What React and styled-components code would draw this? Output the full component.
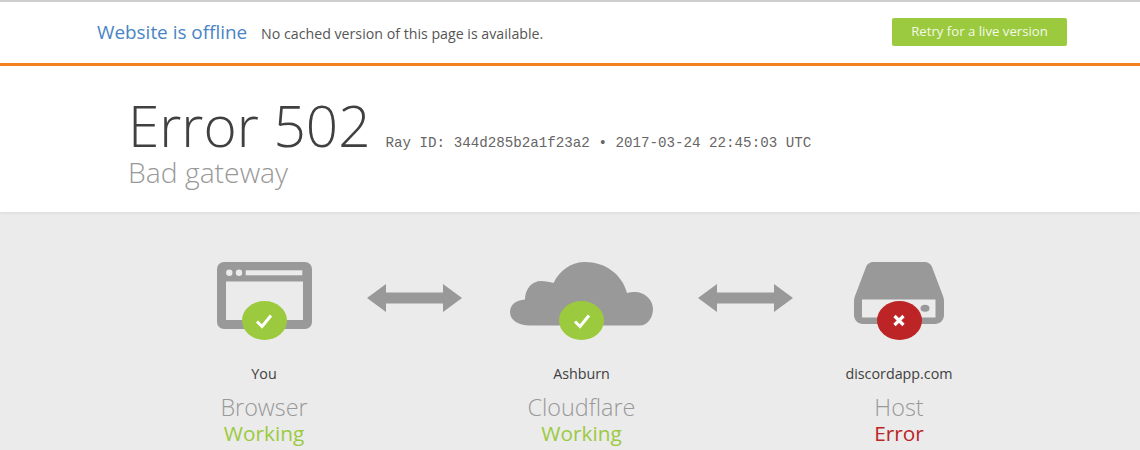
import React from 'react';
import styled, { createGlobalStyle } from 'styled-components';

const GlobalStyle = createGlobalStyle`
  html, body {
    margin: 0;
    padding: 0;
    background: #ebebeb;
    font-family: 'Open Sans', 'Noto Sans', sans-serif;
  }
`;

const Page = styled.div`
  width: 1140px;
  height: 450px;
  overflow: hidden;
  background: #ebebeb;
`;

const Banner = styled.header`
  height: 61px;
  display: flex;
  align-items: center;
  justify-content: space-between;
  padding: 0 73px 0 97px;
  background: #fff;
  border-top: 2px solid #cfcfcf;
  border-bottom: 3px solid #f6821f;
`;

const BannerText = styled.div`
  display: flex;
  align-items: baseline;
  gap: 14px;
  margin-top: -2px;
`;

const OfflineTitle = styled.span`
  font-size: 18.9px;
  color: #4a84c4;
`;

const OfflineNote = styled.span`
  font-size: 14.2px;
  color: #565656;
`;

const RetryButton = styled.button`
  width: 175px;
  height: 28px;
  margin-top: -1px;
  padding: 0 0 2px;
  border: 0;
  border-radius: 2px;
  background: #9bca3e;
  color: #f4f9e8;
  font-family: inherit;
  font-size: 13.2px;
`;

const Hero = styled.section`
  height: 146px;
  box-sizing: border-box;
  padding: 28.5px 0 0 128px;
  background: #fff;
  box-shadow: 0 1px 3px rgba(0, 0, 0, 0.08);
`;

const HeadingRow = styled.div`
  display: flex;
  align-items: baseline;
  gap: 15px;
`;

const ErrorCode = styled.h1`
  margin: 0;
  font-size: 56.7px;
  font-weight: 300;
  line-height: 60px;
  color: #404040;
`;

const RayInfo = styled.span`
  font-family: 'Liberation Mono', 'Courier New', monospace;
  font-size: 14.2px;
  color: #666;
`;

const ErrorName = styled.h2`
  margin: 0;
  font-size: 28.3px;
  font-weight: 300;
  line-height: 34px;
  color: #999;
`;

const Diagram = styled.section`
  display: grid;
  grid-template-columns: 200px 117.5px 200px 117.5px 200px;
  padding: 50px 0 0 164px;
`;

const Node = styled.div`
  display: flex;
  flex-direction: column;
  align-items: center;
`;

const IconWrap = styled.div`
  position: relative;
  height: 82px;
  display: flex;
  justify-content: center;
`;

const Badge = styled.span`
  position: absolute;
  top: 39px;
  left: 50%;
  width: 45px;
  height: 39px;
  margin-left: -22.5px;
  border-radius: 50%;
  display: flex;
  align-items: center;
  justify-content: center;
  background: ${p => (p.$ok ? '#9bca3e' : '#bd2426')};
`;

const Place = styled.div`
  margin-top: 21px;
  font-size: 14.3px;
  line-height: 18px;
  color: #404040;
`;

const Role = styled.div`
  margin-top: 11px;
  font-size: 23.4px;
  font-weight: 300;
  line-height: 26px;
  color: #999;
`;

const Status = styled.div`
  font-size: 20.8px;
  line-height: 26px;
  color: ${p => (p.$ok ? '#9bca3e' : '#bd2426')};
`;

const ArrowSlot = styled.div`
  margin: 22px 0 0 ${p => p.$offset}px;
`;

const Arrow = () => (
  <svg width="95" height="28" viewBox="0 0 95 28" style={{ display: 'block' }}>
    <path d="M0 14 19 0V8.5H76V0L95 14 76 28V19.5H19V28Z" fill="#999" />
  </svg>
);

const Tick = () => (
  <svg width="18" height="16" viewBox="0 0 18 16">
    <path d="M2 8.5 7 13.5 16 2.5" fill="none" stroke="#fff" strokeWidth="3" />
  </svg>
);

const Cross = () => (
  <svg width="14" height="13" viewBox="0 0 14 13">
    <path d="M2.5 2 11.500 11M11.500 2 2.500 11" fill="none" stroke="#fff" strokeWidth="3.2" />
  </svg>
);

const BrowserIcon = () => (
  <svg width="95" height="67" viewBox="0 0 95 67">
    <path
      fillRule="evenodd"
      fill="#999"
      d="M7 0H88A7 7 0 0 1 95 7V60A7 7 0 0 1 88 67H7A7 7 0 0 1 0 60V7A7 7 0 0 1 7 0ZM9 19.500V58H86V19.500Z"
    />
    <circle cx="12.3" cy="10.8" r="3.2" fill="#ebebeb" />
    <circle cx="22" cy="10.8" r="3.2" fill="#ebebeb" />
    <rect x="28.700" y="8.300" width="56.600" height="5" fill="#ebebeb" />
  </svg>
);

const CloudIcon = () => (
  <svg width="143" height="64" viewBox="0 0 143 64">
    <path
      fill="#999"
      d="M20 63.500C8 63.500 0 58 0 50 0 43 6 38 15 37.500 15 27 22 19 31 19 36 19 40 20 43.500 21 50 8 61 0 75 0 95 0 112 12 117 31 120 30 122 30 125 30 135 30 143 38 143 47 143 56 137 63.500 130 63.500Z"
    />
  </svg>
);

const DriveIcon = () => (
  <svg width="90" height="63" viewBox="0 0 90 63">
    <path
      fillRule="evenodd"
      fill="#999"
      d="M20 0H70C74 0 77 2 78 5L89 34C90 37 90 38 90 41V53C90 58 86 62 81 62H9C4 62 0 58 0 53V41C0 38 0 37 1 34L12 5C13 2 16 0 20 0ZM8 37.500V55.500H81.500V37.500Z"
    />
    <ellipse cx="71" cy="46.300" rx="4.500" ry="3.500" fill="#999" />
  </svg>
);

const nodes = [
  { place: 'You', role: 'Browser', status: 'Working', ok: true, Icon: BrowserIcon },
  { place: 'Ashburn', role: 'Cloudflare', status: 'Working', ok: true, Icon: CloudIcon },
  { place: 'discordapp.com', role: 'Host', status: 'Error', ok: false, Icon: DriveIcon },
];

const arrowOffsets = [3, 16];

export default function App() {
  return (
    <Page>
      <GlobalStyle />
      <Banner>
        <BannerText>
          <OfflineTitle>Website is offline</OfflineTitle>
          <OfflineNote>No cached version of this page is available.</OfflineNote>
        </BannerText>
        <RetryButton>Retry for a live version</RetryButton>
      </Banner>
      <Hero>
        <HeadingRow>
          <ErrorCode>Error 502</ErrorCode>
          <RayInfo>Ray ID: 344d285b2a1f23a2 • 2017-03-24 22:45:03 UTC</RayInfo>
        </HeadingRow>
        <ErrorName>Bad gateway</ErrorName>
      </Hero>
      <Diagram>
        {nodes.map((n, i) => (
          <React.Fragment key={n.role}>
            <Node>
              <IconWrap>
                <n.Icon />
                <Badge $ok={n.ok}>{n.ok ? <Tick /> : <Cross />}</Badge>
              </IconWrap>
              <Place>{n.place}</Place>
              <Role>{n.role}</Role>
              <Status $ok={n.ok}>{n.status}</Status>
            </Node>
            {i < 2 && (
              <ArrowSlot $offset={arrowOffsets[i]}>
                <Arrow />
              </ArrowSlot>
            )}
          </React.Fragment>
        ))}
      </Diagram>
    </Page>
  );
}
